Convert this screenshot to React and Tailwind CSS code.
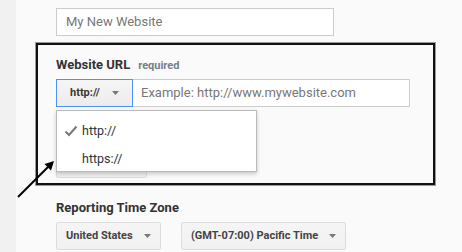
import React from 'react'

const font = { fontFamily: 'Roboto, "Liberation Sans", Arial, sans-serif' }

function Caret() {
  return (
    <svg width="7" height="4" viewBox="0 0 7 4" className="shrink-0">
      <path d="M0 0h7L3.5 4z" fill="#777" />
    </svg>
  )
}

function SelectBox({ label, width }) {
  return (
    <div
      className={`flex h-7 items-center justify-between whitespace-nowrap rounded-[2px] border border-[#dcdcdc] bg-gradient-to-b from-[#f5f5f5] to-[#f1f1f1] pl-[9px] pr-[9px] ${width}`}
    >
      <span className="text-[11px] font-bold text-[#444]">{label}</span>
      <Caret />
    </div>
  )
}

export default function App() {
  return (
    <div className="relative flex h-[252px] w-[462px] overflow-hidden bg-[#fafafa]" style={font}>
      <div className="w-4 shrink-0 bg-[#f1f1f1]" />

      <main className="flex flex-1 flex-col pl-5 pt-2">
        <div className="ml-5 flex h-7 w-[278px] items-center border border-[#ccc] bg-white px-[9px] text-[13px] text-[#777]">
          My New Website
        </div>

        <section className="relative mt-[7px] w-[399px] border-2 border-[#111] pb-[5px] pl-[18px] shadow-[0_0_0_1px_#9a9a9a]">
          <div className="mt-[12px] flex h-4 items-baseline leading-4">
            <span className="text-[13px] font-bold text-[#333]">Website URL</span>
            <span className="ml-2 text-[11px] font-bold text-[#72808a]">required</span>
          </div>

          <div className="mt-[6px] flex h-7">
            <div className="flex w-[77px] items-center justify-between border border-[#4d90fe] bg-gradient-to-b from-[#f5f5f5] to-[#ececec] pl-[13px] pr-[13px]">
              <span className="text-[11px] font-bold text-[#3a3a3a]">http://</span>
              <Caret />
            </div>
            <div className="flex w-[277px] items-center whitespace-nowrap border border-l-0 border-[#ccc] bg-white pl-[8px] text-[13px] text-[#777]">
              Example: http://www.mywebsite.com
            </div>
          </div>

          <div className="mt-[43px] h-7 w-[91px] rounded-[2px] border border-[#ddd] bg-[#f1f1f1]" />

          <div className="absolute left-[18px] top-[65px] z-10 h-[62px] w-[201px] border border-[#bbb] bg-white pt-[6px] shadow-[0_2px_4px_rgba(0,0,0,0.2)]">
            <div className="flex h-7 items-center text-[12.5px] text-[#333]">
              <svg width="14" height="12" viewBox="0 0 14 12" className="ml-[7px] mr-[4px]">
                <path d="M1.5 6.5l3.5 3.5 7.5-8.5" fill="none" stroke="#777" strokeWidth="2" />
              </svg>
              http://
            </div>
            <div className="flex h-7 items-center pl-[25px] text-[12.5px] text-[#333]">https://</div>
          </div>
        </section>

        <div className="ml-5 mt-[14px] h-[17px] text-[13px] font-bold leading-[17px] text-[#333]">
          Reporting Time Zone
        </div>

        <div className="ml-5 mt-[6px] flex gap-5">
          <SelectBox label="United States" width="w-[105px]" />
          <SelectBox label="(GMT-07:00) Pacific Time" width="w-[165px]" />
        </div>
      </main>

      <svg className="pointer-events-none absolute left-0 top-0" width="462" height="252">
        <line x1="18" y1="197" x2="48" y2="167" stroke="#000" strokeWidth="2" />
        <path d="M54 161l-9.5 3 6.5 6.5z" fill="#000" />
      </svg>
    </div>
  )
}
